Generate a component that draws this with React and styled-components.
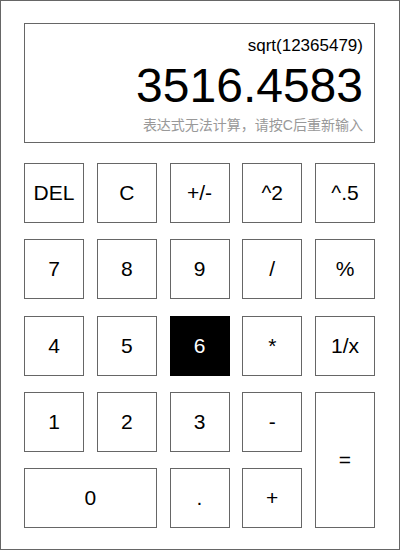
import React from "react";
import styled, { createGlobalStyle } from "styled-components";

const GlobalStyle = createGlobalStyle`
  html, body {
    margin: 0;
    padding: 0;
    background: #fff;
  }
  body {
    font-family: "Liberation Sans", Arial, "Noto Sans CJK SC", sans-serif;
  }
`;

const KEYS = [
  { label: "DEL" },
  { label: "C" },
  { label: "+/-" },
  { label: "^2" },
  { label: "^.5" },
  { label: "7" },
  { label: "8" },
  { label: "9" },
  { label: "/" },
  { label: "%" },
  { label: "4" },
  { label: "5" },
  { label: "6", active: true },
  { label: "*" },
  { label: "1/x" },
  { label: "1" },
  { label: "2" },
  { label: "3" },
  { label: "-" },
  { label: "=", rows: 2 },
  { label: "0", cols: 2 },
  { label: "." },
  { label: "+" },
];

const Frame = styled.div`
  box-sizing: border-box;
  width: 400px;
  height: 550px;
  border: 1px solid #666;
  padding: 22px 24px 0 23px;
  display: flex;
  flex-direction: column;
  gap: 20px;
`;

const Screen = styled.div`
  box-sizing: border-box;
  height: 120px;
  border: 1px solid #666;
  padding: 12px 11px 0 0;
  display: flex;
  flex-direction: column;
  align-items: flex-end;
`;

const Expression = styled.div`
  font-size: 17px;
  line-height: 20px;
  color: #000;
`;

const Result = styled.div`
  margin-top: 2px;
  font-size: 48px;
  line-height: 56px;
  color: #000;
`;

const Hint = styled.div`
  margin-top: 2px;
  font-size: 14px;
  line-height: 18px;
  color: #999;
  font-family: "Liberation Sans", "Noto Sans CJK SC", sans-serif;
`;

const Keypad = styled.div`
  display: grid;
  grid-template-columns: repeat(5, 60px);
  grid-auto-rows: 60px;
  justify-content: space-between;
  row-gap: 16.25px;
`;

const Key = styled.button`
  box-sizing: border-box;
  margin: 0;
  padding: 0;
  grid-column: span ${(p) => p.$cols || 1};
  grid-row: span ${(p) => p.$rows || 1};
  border: 1px solid ${(p) => (p.$active ? "#000" : "#666")};
  background: ${(p) => (p.$active ? "#000" : "#fff")};
  color: ${(p) => (p.$active ? "#fff" : "#000")};
  font-family: "Liberation Sans", Arial, sans-serif;
  font-size: 21px;
  display: flex;
  align-items: center;
  justify-content: center;
  cursor: pointer;
`;

export default function App() {
  return (
    <>
      <GlobalStyle />
      <Frame>
        <Screen>
          <Expression>sqrt(12365479)</Expression>
          <Result>3516.4583</Result>
          <Hint>表达式无法计算，请按C后重新输入</Hint>
        </Screen>
        <Keypad>
          {KEYS.map((key) => (
            <Key
              key={key.label}
              $active={key.active}
              $cols={key.cols}
              $rows={key.rows}
            >
              {key.label}
            </Key>
          ))}
        </Keypad>
      </Frame>
    </>
  );
}
